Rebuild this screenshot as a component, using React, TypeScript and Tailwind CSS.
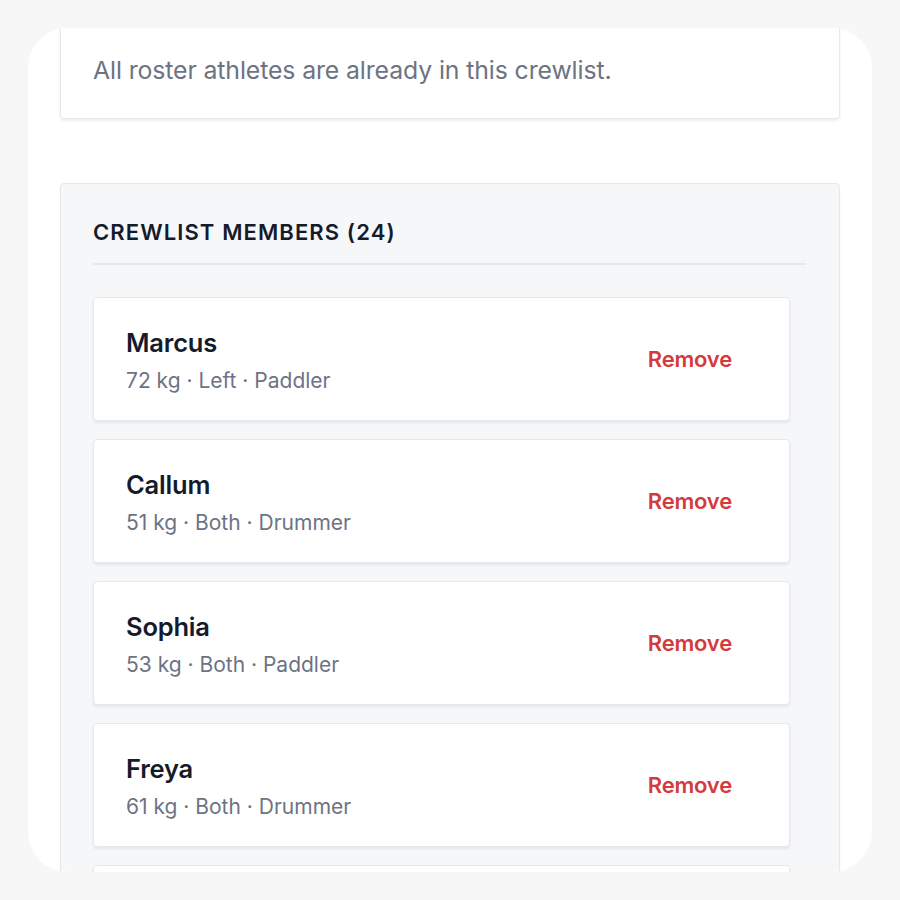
import type {ReactNode} from 'react';

type Member = {
    name: string;
    weight: number;
    side: string;
    role: string;
};

const members: Member[] = [
    {name: 'Marcus', weight: 72, side: 'Left', role: 'Paddler'},
    {name: 'Callum', weight: 51, side: 'Both', role: 'Drummer'},
    {name: 'Sophia', weight: 53, side: 'Both', role: 'Paddler'},
    {name: 'Freya', weight: 61, side: 'Both', role: 'Drummer'},
    {name: 'Oliver', weight: 80, side: 'Right', role: 'Paddler'},
];

function Card({children, className}: { children: ReactNode; className?: string }) {
    return (
        <div className={`rounded-[4px] border border-[#e6e8ee] bg-white shadow-[0_2px_3px_rgba(30,40,80,0.08)] ${className ?? ''}`}>
            {children}
        </div>
    );
}

function MemberRow({member}: { member: Member }) {
    return (
        <Card className="flex items-center justify-between pl-[32px] pr-[57px] pt-[29px] pb-[25px]">
            <div className="flex flex-col gap-[8px]">
                <div className="text-[25.5px] leading-[32px] font-semibold text-[#161b2b] tracking-[-0.2px]">
                    {member.name}
                </div>
                <div className="text-[21px] leading-[28px] text-[#6d7383]">
                    {member.weight} kg · {member.side} · {member.role}
                </div>
            </div>
            <button type="button" className="-mt-[4px] text-[22px] leading-[28px] font-semibold text-[#d33b3d] tracking-[-0.2px]">
                Remove
            </button>
        </Card>
    );
}

export default function App() {
    return (
        <div className="min-h-[900px] w-full bg-[#f7f7f8] p-[28px] font-['Inter',sans-serif]">
            <div className="h-[844px] overflow-hidden rounded-[40px] bg-white px-[32px]">
                <div className="-mt-[8px]">
                    <Card className="px-[32px] pt-[34px] pb-[33px]">
                        <p className="text-[24.8px] leading-[30px] text-[#6d7383] tracking-[-0.1px]">
                            All roster athletes are already in this crewlist.
                        </p>
                    </Card>

                    <div className="mt-[64px] rounded-[4px] border border-[#e6e8ee] bg-[#f6f7f9] pl-[32px] pr-[33px] pt-[34px] shadow-[0_1px_2px_rgba(30,40,80,0.05)]">
                        <h2 className="border-b-2 border-[#e6e8ee] pb-[17px] text-[22px] leading-[28px] font-semibold tracking-[1.1px] text-[#161b2b]">
                            CREWLIST MEMBERS ({24})
                        </h2>
                        <div className="mt-[32px] flex flex-col gap-[18px] pr-[16px]">
                            {members.map((member) => (
                                <MemberRow key={member.name} member={member}/>
                            ))}
                        </div>
                    </div>
                </div>
            </div>
        </div>
    );
}
